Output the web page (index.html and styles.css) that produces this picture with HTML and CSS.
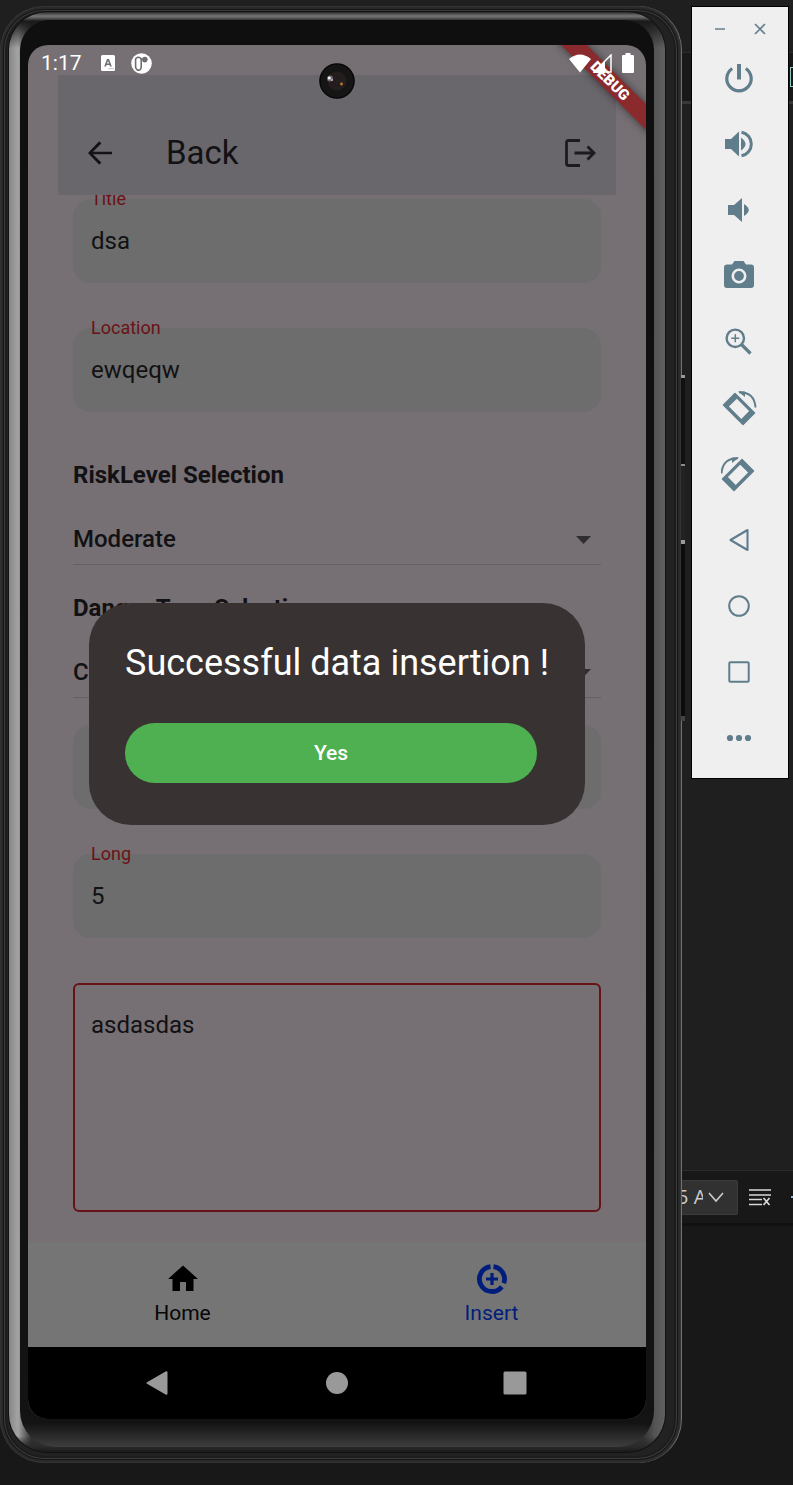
FILE: index.html
```html
<!DOCTYPE html>
<html lang="en">
<head>
<meta charset="utf-8">
<meta name="viewport" content="width=device-width, initial-scale=1">
<title>Android Emulator</title>
<link rel="stylesheet" href="styles.css">
</head>
<body>
<div class="desktop">
  <div class="ide">
    <div class="ide-top"></div>
    <div class="ide-tabs"><span class="ide-chip"></span></div>
    <div class="ide-editor"></div>
    <div class="ide-bar">
      <button class="ide-select" type="button"><span class="ide-select-text">5 A</span>
        <svg width="16" height="16" viewBox="0 0 16 16"><path d="M1 4l7 8 7-8" fill="none" stroke="#d0d0d0" stroke-width="1.500"/></svg>
      </button>
      <button class="ide-clear" type="button" aria-label="Clear output">
        <svg width="22" height="18" viewBox="0 0 22 18"><path d="M0 2h22M0 7h22M0 11.500h13M0 16.500h13M14.500 10l6 7M20.500 10l-6 7" fill="none" stroke="#d8d8d8" stroke-width="1.700"/></svg>
      </button>
      <span class="ide-edge"></span>
    </div>
    <div class="ide-panel"></div>
  </div>

  <div class="phone">
    <div class="side-key"></div>
    <div class="phone-metal">
      <div class="phone-glass">
        <main class="screen">
          <div class="statusbar">
            <span class="clock">1:17</span>
            <svg class="status-app" width="14" height="16" viewBox="0 0 14 16"><rect width="14" height="16" rx="1.500" fill="#fff"/><path d="M3.200 11.500L6 4h2l2.800 7.500H9L8.500 10h-3L5 11.500zM6 8.600h2L7 5.700z" fill="#716c70"/><path d="M7.500 13.700h5" stroke="#8a868a" stroke-width="1" stroke-dasharray="1 1"/></svg>
            <svg width="21" height="21" viewBox="0 0 21 21"><circle cx="10.500" cy="10.500" r="10.300" fill="#fff"/><path d="M9.500 5.200Q6.500 3 4.600 6v8.500q1.400 3.800 4.400 2.200 1.200-.8 1.200-3V5.800z" fill="#fff" stroke="#716c70" stroke-width="1.600"/><circle cx="13.800" cy="6.600" r="2.800" fill="#716c70"/></svg>
            <span class="status-gap"></span>
            <svg class="wifi" width="22" height="19" viewBox="0 0 22 19"><path d="M0 5Q11-4 22 5L11 18.500z" fill="#fff"/></svg>
            <svg class="signal" width="19" height="19" viewBox="0 0 19 19"><path d="M1 18L18 1v17z" fill="none" stroke="#fff" stroke-width="1.500"/><path d="M0 19L12 7v12z" fill="#fff"/></svg>
            <svg width="12" height="20" viewBox="0 0 12 20"><path d="M3.500 0h5v2H11a1 1 0 0 1 1 1v16a1 1 0 0 1-1 1H1a1 1 0 0 1-1-1V3a1 1 0 0 1 1-1h2.500z" fill="#fff"/></svg>
          </div>

          <header class="appbar">
            <button class="icon-button" type="button" aria-label="Back">
              <svg width="36" height="36" viewBox="0 0 24 24"><path d="M20 11.200H7.300l5.600-5.600L11.500 4.200 4 12l7.500 7.800 1.400-1.400-5.600-5.600H20z" fill="#141317"/></svg>
            </button>
            <h1 class="appbar-title">Back</h1>
            <button class="icon-button" type="button" aria-label="Log out">
              <svg width="32" height="30" viewBox="0 0 32 30"><path d="M16 2.500H4.500Q2.500 2.500 2.500 4.500v21q0 2 2 2H16" fill="none" stroke="#1c1b1f" stroke-width="2.800"/><path d="M10.500 15H30M23.500 8.500L30 15l-6.500 6.500" fill="none" stroke="#1c1b1f" stroke-width="2.800"/></svg>
            </button>
          </header>

          <form class="form">
            <div class="field"><label class="field-label" for="title">Title</label><input class="field-input" id="title" type="text" value="dsa"></div>
            <div class="field"><label class="field-label" for="location">Location</label><input class="field-input" id="location" type="text" value="ewqeqw"></div>
            <label class="heading heading-first" for="risk">RiskLevel Selection</label>
            <div class="dropdown">
              <select class="dropdown-select" id="risk"><option>Moderate</option></select>
              <svg class="dropdown-arrow" width="15" height="8" viewBox="0 0 15 8"><path d="M0 0h15L7.500 8z" fill="#2f2d2f"/></svg>
            </div>
            <label class="heading" for="danger">Danger Type Selection</label>
            <div class="dropdown">
              <select class="dropdown-select" id="danger"><option>C</option></select>
              <svg class="dropdown-arrow" width="15" height="8" viewBox="0 0 15 8"><path d="M0 0h15L7.500 8z" fill="#2f2d2f"/></svg>
            </div>
            <div class="field field-after"><input class="field-input" type="text" aria-label="Latitude"></div>
            <div class="field"><label class="field-label" for="long">Long</label><input class="field-input" id="long" type="text" value="5"></div>
            <textarea class="notes" aria-label="Description">asdasdas</textarea>
          </form>

          <nav class="tabs">
            <a class="tab" href="#home">
              <svg width="36" height="36" viewBox="0 0 24 24"><path d="M10 20v-6h4v6h5v-8h3L12 3 2 12h3v8z" fill="#000"/></svg>
              <span>Home</span>
            </a>
            <a class="tab tab-active" href="#insert">
              <svg width="36" height="36" viewBox="0 0 36 36"><path d="M16.500 5.600A12.500 12.500 0 1 0 27.800 25.700M19.500 5.600A12.500 12.500 0 0 1 29.800 22.200" fill="none" stroke="#001d7c" stroke-width="4.800"/><path d="M18 12v12M12 18h12" stroke="#001d7c" stroke-width="3.200"/></svg>
              <span>Insert</span>
            </a>
          </nav>

          <div class="sysnav">
            <button class="sys-button" type="button" aria-label="System back"><svg width="26" height="26" viewBox="0 0 26 26"><path d="M1.500 13L20.500 2.200v21.600z" fill="#999" stroke="#999" stroke-width="2" stroke-linejoin="round"/></svg></button>
            <button class="sys-button" type="button" aria-label="System home"><svg width="26" height="26" viewBox="0 0 26 26"><circle cx="13" cy="13" r="11" fill="#999"/></svg></button>
            <button class="sys-button" type="button" aria-label="System overview"><svg width="26" height="26" viewBox="0 0 26 26"><rect x="1.500" y="1.500" width="23" height="23" rx="1.500" fill="#999"/></svg></button>
          </div>

          <div class="ribbon">DEBUG</div>
          <svg class="camera" width="36" height="36" viewBox="0 0 36 36"><circle cx="18" cy="18" r="17.800" fill="#050505"/><circle cx="18" cy="18" r="16.500" fill="#151515"/><circle cx="18" cy="18" r="9.500" fill="#241d1d"/><circle cx="11" cy="15.500" r="3" fill="#6e6870"/><circle cx="10.300" cy="15" r="1.500" fill="#e9fff6"/><circle cx="13" cy="17" r="1" fill="#d9a8d8"/><circle cx="22.500" cy="21" r="1.400" fill="#c07a2c"/></svg>

          <div class="overlay">
            <div class="dialog" role="dialog" aria-labelledby="dialog-title">
              <h2 class="dialog-title" id="dialog-title">Successful data insertion !</h2>
              <button class="dialog-button" type="button">Yes</button>
            </div>
          </div>
        </main>
      </div>
    </div>
  </div>

  <aside class="toolbar">
    <div class="toolbar-head">
      <button class="tool-small" type="button" aria-label="Minimize"><svg width="12" height="12" viewBox="0 0 12 12"><path d="M1 6h10" stroke="#64808d" stroke-width="1.500"/></svg></button>
      <button class="tool-small" type="button" aria-label="Close"><svg width="12" height="12" viewBox="0 0 12 12"><path d="M1 1l10 10M11 1L1 11" stroke="#64808d" stroke-width="1.700"/></svg></button>
    </div>
    <button class="tool" type="button" aria-label="Power"><svg width="32" height="32" viewBox="0 0 32 32"><path d="M9.200 6.500a12.200 12.200 0 1 0 13.600 0" fill="none" stroke="#607d8b" stroke-width="3.200"/><path d="M16 2v15.500" stroke="#607d8b" stroke-width="4"/></svg></button>
    <button class="tool" type="button" aria-label="Volume up"><svg width="32" height="32" viewBox="0 0 32 32"><path d="M2 11h6l8-7.500v25L8 21H2zM18 9.500q9 6.500 0 13z" fill="#607d8b"/><path d="M18.500 4.200a12 12 0 0 1 0 23.600" fill="none" stroke="#607d8b" stroke-width="3"/></svg></button>
    <button class="tool" type="button" aria-label="Volume down"><svg width="32" height="32" viewBox="0 0 32 32"><path d="M5 11h6l8-7v24l-8-7H5zM21 10q9.500 6 0 12z" fill="#607d8b"/></svg></button>
    <button class="tool" type="button" aria-label="Take screenshot"><svg width="32" height="32" viewBox="0 0 32 32"><path d="M11.500 1h9l2.500 3.500h5a3 3 0 0 1 3 3V25a3 3 0 0 1-3 3H4a3 3 0 0 1-3-3V7.500a3 3 0 0 1 3-3h5z" fill="#607d8b"/><circle cx="16" cy="16" r="6.200" fill="#607d8b" stroke="#efefef" stroke-width="2.600"/></svg></button>
    <button class="tool" type="button" aria-label="Zoom"><svg width="32" height="32" viewBox="0 0 32 32"><circle cx="12.300" cy="12.300" r="8.700" fill="none" stroke="#607d8b" stroke-width="2.400"/><path d="M12.300 8.300v8M8.300 12.300h8" stroke="#607d8b" stroke-width="1.500"/><path d="M18.500 18.500l9 9" stroke="#607d8b" stroke-width="3.200"/></svg></button>
    <button class="tool" type="button" aria-label="Rotate left"><svg width="36" height="36" viewBox="0 0 36 36"><g id="rot"><path d="M14 3.500L33.500 23 22 34.500 2.500 15z" fill="#607d8b" stroke="#607d8b" stroke-width="1.500" stroke-linejoin="round"/><path d="M15.800 8.700L28.100 21 20.300 28.900 7.900 16.600z" fill="#efefef"/><path d="M18 2.200Q33.500 2 34.500 17.500" fill="none" stroke="#607d8b" stroke-width="1.900"/><path d="M17 1.500h7v5.500z" fill="#607d8b"/></g></svg></button>
    <button class="tool" type="button" aria-label="Rotate right"><svg width="36" height="36" viewBox="0 0 36 36"><use href="#rot" transform="translate(35 0) scale(-1 1)"/></svg></button>
    <button class="tool" type="button" aria-label="Back key"><svg width="32" height="32" viewBox="0 0 32 32"><path d="M7.500 16L24.500 6v20z" fill="none" stroke="#607d8b" stroke-width="2.100" stroke-linejoin="round"/></svg></button>
    <button class="tool" type="button" aria-label="Home key"><svg width="32" height="32" viewBox="0 0 32 32"><circle cx="16" cy="16" r="9.800" fill="none" stroke="#607d8b" stroke-width="2"/></svg></button>
    <button class="tool" type="button" aria-label="Overview key"><svg width="32" height="32" viewBox="0 0 32 32"><rect x="6.300" y="6.300" width="19.400" height="19.400" rx="1" fill="none" stroke="#607d8b" stroke-width="2"/></svg></button>
    <button class="tool" type="button" aria-label="More"><svg width="32" height="32" viewBox="0 0 32 32"><g fill="#607d8b"><circle cx="7" cy="16" r="3.100"/><circle cx="16" cy="16" r="3.100"/><circle cx="25" cy="16" r="3.100"/></g></svg></button>
  </aside>
</div>
</body>
</html>
```
FILE: styles.css
```css
* { box-sizing: border-box; }
body { margin: 0; background: #181818; font-family: Roboto, "Liberation Sans", sans-serif; }
button { border: 0; padding: 0; background: none; font: inherit; color: inherit; cursor: pointer; }
svg { display: block; }

.desktop { position: relative; display: flex; align-items: flex-start; min-height: 100vh; padding: 6px 4px 22px 0; overflow: hidden; }

/* editor window behind the emulator */
.ide { position: absolute; inset: 0; display: flex; flex-direction: column; background: #1f1f1f; }
.ide-top { height: 52px; }
.ide-tabs { display: flex; justify-content: flex-end; align-items: center; height: 52px; background: #181818; border-top: 1px solid #2b2b2b; border-bottom: 3px solid #373737; }
.ide-chip { width: 3px; height: 20px; border: 1px solid #8fc7c0; border-right: 0; }
.ide-editor { flex: 1; }
.ide-bar { display: flex; align-items: center; justify-content: flex-end; gap: 11px; height: 56px; background: #181818; border-top: 1px solid #2b2b2b; border-bottom: 3px solid #111; }
.ide-select { display: flex; align-items: center; justify-content: flex-end; gap: 5px; width: 120px; height: 35px; padding-right: 13px; background: #313131; border: 1px solid #3c3c3c; border-radius: 2px; color: #ccc; }
.ide-select-text { font: 20px/24px "Open Sans", sans-serif; width: 26px; overflow: hidden; white-space: nowrap; }
.ide-edge { width: 2px; height: 2px; margin-left: 9px; background: #8ab4d8; }
.ide-panel { height: 259px; background: #181818; }

/* phone body */
.phone { position: relative; flex: 1; min-width: 0; margin-right: 9px; padding: 6px 16px 11px 9px; border-right: 1px solid #707070; border-radius: 44px; background: #222;
  box-shadow: inset 0 0 0 1px #333, inset 0 0 0 3px #2a2a2a, inset 0 0 0 4px #141414, inset 0 0 0 5px #3c3c3c, inset 0 0 0 7px #1c1c1c; }
.phone-metal { padding: 8px 11px 5px; border-radius: 38px;
  background:
    linear-gradient(#2a2a2a 0, #757575 4px, #5a5a5a 6px, #1a1a1a 9px, #1a1a1a00 36px) no-repeat,
    linear-gradient(to top, #191919 0, #2a2a2a 5px, #2a2a2a00 16px) no-repeat,
    linear-gradient(to right, #868686 0, #a4a4a4 9px, #333 22px, #333 calc(100% - 22px), #555 calc(100% - 10px), #606060);
  box-shadow: 0 0 0 1px #111; }
.phone-glass { padding: 25px 8px 28px; border-radius: 30px 30px 36px 36px; background: linear-gradient(#0f0f0f 0, #131313 calc(100% - 24px), #3e3e3e); }
.side-key { position: absolute; top: 369px; right: -4px; width: 4px; height: 346px; background: linear-gradient(#999 0 3px, #111 3px 89px, #8a8a8a 89px 91px, #222 91px 165px, #999 165px 169px, #0c0c0c 169px 341px, #444 341px); }

.screen { position: relative; display: flex; flex-direction: column; border-radius: 20px; overflow: hidden; background: #767074; color: #121114; }
.statusbar { position: relative; z-index: 3; display: flex; align-items: center; height: 30px; padding: 6px 12px 0 13px; color: #fff; }
.clock { width: 60px; font-size: 21px; line-height: 24px; }
.status-app { margin-right: 16px; }
.status-gap { flex: 1; }
.wifi { margin-right: 2px; }
.signal { margin-right: 10px; }

.appbar { display: flex; align-items: center; height: 120px; margin: 0 30px; padding: 36px 20px 0 24px; background: #69676c; }
.icon-button { flex: none; }
.appbar-title { flex: 1; margin: 0 0 0 48px; font-size: 33px; font-weight: 400; line-height: 40px; }

.form { padding: 4px 45px 30px; overflow: hidden; }
.field { position: relative; margin-bottom: 45px; }
.field-label { position: absolute; top: -12px; left: 18px; font-size: 18px; line-height: 24px; color: #6b1216; }
.field-input { display: block; width: 100%; height: 84px; padding: 0 18px; border: 0; border-radius: 18px; background: #6c6d6c; color: inherit; font: 24px/32px Roboto, sans-serif; }
.field-after { margin-top: 27px; }
.heading { display: block; margin: 29px 0 26px; font-size: 24px; font-weight: 700; line-height: 28px; }
.heading-first { margin-top: 49px; }
.dropdown { position: relative; }
.dropdown-select { display: block; width: 100%; height: 50px; padding: 0 36px 2px 0; appearance: none; border: 0; border-bottom: 1px solid #656063; border-radius: 0; background: none; color: inherit; font: 500 24px/32px Roboto, sans-serif; }
.dropdown-arrow { position: absolute; top: 21px; right: 10px; pointer-events: none; }
.notes { display: block; width: 100%; height: 229px; padding: 24px 16px; resize: none; border: 2px solid #651316; border-radius: 6px; background: none; color: inherit; font: 24px/32px Roboto, sans-serif; }

.tabs { display: flex; background: #757575; }
.tab { flex: 1; display: flex; flex-direction: column; align-items: center; gap: 4px; padding: 19px 0 22px; font-size: 21px; line-height: 24px; color: #060606; text-decoration: none; }
.tab-active { color: #001d7c; }
.sysnav { display: flex; justify-content: center; height: 72px; background: #000; }
.sys-button { flex: 0 1 178px; display: grid; place-items: center; }

.ribbon { position: absolute; z-index: 2; top: 27px; right: -29px; width: 130px; height: 18px; transform: rotate(45deg); background: #8b2a2d; box-shadow: 0 0 9px #0008; color: #fff; text-align: center; font-size: 15px; font-weight: 900; line-height: 18px; }
.camera { position: absolute; z-index: 4; top: 18px; left: calc(50% - 18px); }

.overlay { position: absolute; z-index: 5; inset: 0 0 36px; display: grid; place-items: center stretch; padding: 0 61px; }
.dialog { padding: 36px 36px 42px; border-radius: 42px; background: #383332; color: #fff; }
.dialog-title { margin: 0 0 36px; font-size: 36px; font-weight: 400; line-height: 48px; white-space: nowrap; }
.dialog-button { display: block; width: calc(100% - 12px); height: 60px; border-radius: 30px; background: #4eb050; font-size: 21px; font-weight: 500; }

/* emulator controls */
.toolbar { position: relative; flex: none; width: 98px; padding-bottom: 7px; display: flex; flex-direction: column; background: #efefef; border: 1px solid #000; }
.toolbar-head { display: flex; justify-content: center; gap: 28px; padding: 16px 0 10px; }
.tool-small { width: 12px; height: 12px; }
.tool { display: grid; place-items: center; height: 66px; padding-right: 2px; }
```
